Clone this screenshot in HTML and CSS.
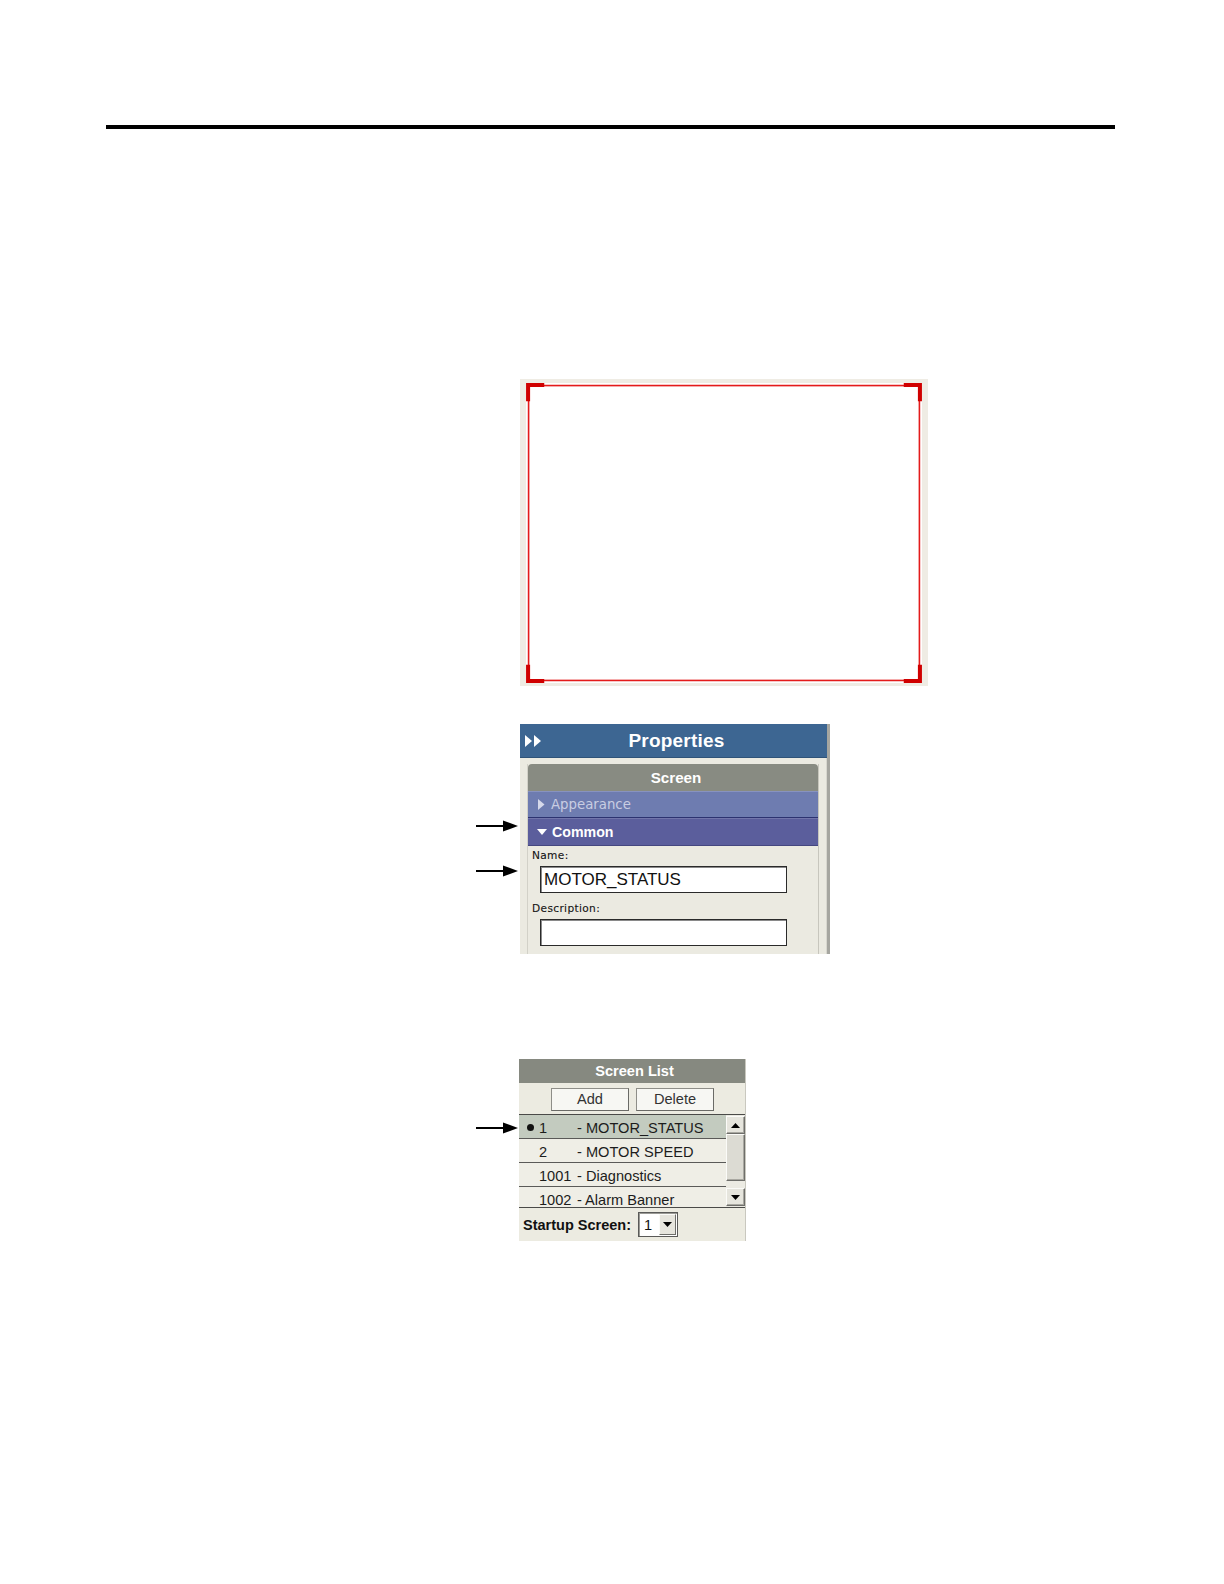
FILE: index.html
```html
<!DOCTYPE html>
<html lang="en">
<head>
<meta charset="utf-8">
<title>Screen properties</title>
<link rel="stylesheet" href="styles.css">
</head>
<body>
<div class="page">
  <div class="rule"></div>

  <div class="canvas">
    <svg class="canvas-svg" width="408" height="307" viewBox="0 0 404 304" preserveAspectRatio="none">
      <rect x="6" y="4" width="392" height="297" fill="#ffffff"/>
      <rect x="8.5" y="6.5" width="387" height="292" fill="none" stroke="#e41b1b" stroke-width="1.6"/>
      <g fill="none" stroke="#d00000" stroke-width="4" stroke-linecap="butt">
        <path d="M8 22 V6 H24"/>
        <path d="M380 6 H396 V22"/>
        <path d="M8 283 V299 H24"/>
        <path d="M380 299 H396 V283"/>
      </g>
    </svg>
  </div>

  <div class="figure figure-props">
    <svg class="arrow arrow-a" width="42" height="12" viewBox="0 0 42 12"><line x1="0" y1="6" x2="30" y2="6" stroke="#000" stroke-width="2"/><polygon points="27,0.5 42,6 27,11.5" fill="#000"/></svg>
    <svg class="arrow arrow-b" width="42" height="12" viewBox="0 0 42 12"><line x1="0" y1="6" x2="30" y2="6" stroke="#000" stroke-width="2"/><polygon points="27,0.5 42,6 27,11.5" fill="#000"/></svg>
    <div class="props">
      <div class="props-head">
        <svg class="ff" width="17" height="12" viewBox="0 0 17 12"><polygon points="0,0 7,6 0,12" fill="#fff"/><polygon points="9,0 16,6 9,12" fill="#fff"/></svg>
        <span class="props-title">Properties</span>
      </div>
      <div class="props-body">
        <div class="group">
          <div class="group-title">Screen</div>
          <div class="cat cat-closed"><svg class="tri" width="9" height="11" viewBox="0 0 9 11"><polygon points="1,0 7.5,5.5 1,11" fill="#d6d9ea"/></svg><span>Appearance</span></div>
          <div class="cat cat-open"><svg class="tri" width="10" height="10" viewBox="0 0 10 10"><polygon points="0,2 10,2 5,8" fill="#ffffff"/></svg><span>Common</span></div>
          <div class="fields">
            <div class="lbl">Name:</div>
            <div class="input">MOTOR_STATUS</div>
            <div class="lbl lbl-2">Description:</div>
            <div class="input"></div>
          </div>
        </div>
      </div>
    </div>
  </div>

  <div class="figure figure-list">
    <svg class="arrow arrow-c" width="42" height="12" viewBox="0 0 42 12"><line x1="0" y1="6" x2="30" y2="6" stroke="#000" stroke-width="2"/><polygon points="27,0.5 42,6 27,11.5" fill="#000"/></svg>
    <div class="slist">
      <div class="slist-head">Screen List</div>
      <div class="btns">
        <div class="btn">Add</div>
        <div class="btn">Delete</div>
      </div>
      <div class="list">
        <div class="rows">
          <div class="row sel"><span class="dot"><span class="dot-mark"></span></span><span class="num">1</span><span>- MOTOR_STATUS</span></div>
          <div class="row"><span class="dot"></span><span class="num">2</span><span>- MOTOR SPEED</span></div>
          <div class="row"><span class="dot"></span><span class="num">1001</span><span>- Diagnostics</span></div>
          <div class="row"><span class="dot"></span><span class="num">1002</span><span>- Alarm Banner</span></div>
        </div>
        <div class="scroll">
          <div class="sb-btn"><svg width="9" height="5" viewBox="0 0 9 5"><polygon points="0,5 9,5 4.5,0" fill="#000"/></svg></div>
          <div class="sb-thumb"></div>
          <div class="sb-track"></div>
          <div class="sb-btn"><svg width="9" height="5" viewBox="0 0 9 5"><polygon points="0,0 9,0 4.5,5" fill="#000"/></svg></div>
        </div>
      </div>
      <div class="startup">
        <span class="startup-lbl">Startup Screen:</span>
        <div class="combo"><span class="combo-val">1</span><span class="combo-btn"><svg width="9" height="5" viewBox="0 0 9 5"><polygon points="0,0 9,0 4.5,5" fill="#000"/></svg></span></div>
      </div>
    </div>
  </div>
</div>
</body>
</html>
```

FILE: styles.css
```css
* { box-sizing: border-box; }

html, body {
  margin: 0;
  padding: 0;
  background: #ffffff;
}

.page {
  width: 1224px;
  min-height: 1584px;
  overflow: hidden;
  padding-top: 125px;
  font-family: "Liberation Sans", Arial, sans-serif;
}

.rule {
  margin-left: 106px;
  width: 1009px;
  height: 4px;
  background: #000000;
}

.canvas {
  margin: 250px 0 0 520px;
  width: 408px;
  height: 307px;
  background: #efece4;
}

.canvas-svg { display: block; }

.figure {
  position: relative;
}

.arrow {
  position: absolute;
  display: block;
}

/* ---------- Properties ---------- */

.figure-props {
  margin: 38px 0 0 520px;
  width: 310px;
}

.arrow-a { left: -44px; top: 96px; }
.arrow-b { left: -44px; top: 141px; }

.props {
  width: 310px;
  height: 230px;
  overflow: hidden;
  background: #ebeae1;
  border-right: 3px solid #a6a6a0;
  box-shadow: inset -1px 0 0 #d8d7cf;
}

.props-head {
  height: 34px;
  background: #3d6692;
  display: flex;
  align-items: center;
  border-bottom: 1px solid #2f5378;
}

.ff {
  display: block;
  margin-left: 5px;
  flex: none;
}

.props-title {
  flex: 1;
  text-align: center;
  margin-right: 16px;
  color: #ffffff;
  font-weight: bold;
  font-size: 19px;
  letter-spacing: 0.2px;
}

.props-body {
  padding: 6px 8px 0 7px;
}

.group {
  border-left: 1px solid #d2d1c8;
  border-right: 1px solid #c7c6bd;
}

.group-title {
  height: 27px;
  background: #888b82;
  border-radius: 4px 4px 0 0;
  color: #ffffff;
  font-weight: bold;
  font-size: 15.2px;
  line-height: 28px;
  text-align: center;
  padding-left: 6px;
}

.cat {
  display: flex;
  align-items: center;
  height: 27px;
  padding-left: 9px;
}

.tri {
  display: block;
  flex: none;
  margin-right: 5px;
}

.cat-closed {
  background: #6e7cb0;
  border-top: 1px solid #8792c0;
  border-bottom: 1px solid #2c3270;
  color: #c9cde2;
  font-family: "DejaVu Sans", Verdana, sans-serif;
  font-size: 13.3px;
}

.cat-open {
  background: #5b5e9c;
  border-top: 1px solid #7275ab;
  border-bottom: 1px solid #45477f;
  color: #ffffff;
  font-weight: bold;
  font-size: 14.2px;
  height: 28px;
}

.fields {
  padding: 2px 0 10px 4px;
}

.lbl {
  font-family: "DejaVu Sans", Verdana, sans-serif;
  font-size: 10.6px;
  line-height: 14px;
  color: #111111;
  letter-spacing: 0.35px;
  -webkit-text-stroke: 0.1px #111111;
}

.lbl-2 { margin-top: 8px; }

.input {
  margin: 4px 0 0 8px;
  width: 247px;
  height: 27px;
  background: #ffffff;
  border: 1px solid #2a2a2a;
  box-shadow: inset 1px 1px 0 #8a8a8a;
  font-size: 17px;
  line-height: 25px;
  padding-left: 3px;
  color: #111111;
}

/* ---------- Screen List ---------- */

.figure-list {
  margin: 105px 0 0 519px;
  width: 227px;
}

.arrow-c { left: -43px; top: 63px; }

.slist {
  width: 227px;
  background: #ecebe1;
  border-right: 1px solid #c9c8bf;
}

.slist-head {
  height: 24px;
  background: #868980;
  color: #ffffff;
  font-weight: bold;
  font-size: 14.6px;
  line-height: 25px;
  text-align: center;
  padding-left: 5px;
}

.btns {
  display: flex;
  gap: 7px;
  height: 31px;
  padding: 5px 0 0 32px;
}

.btn {
  width: 78px;
  height: 23px;
  background: #f7f7f3;
  border: 1px solid #8e8e88;
  border-right-color: #6a6a66;
  border-bottom-color: #6a6a66;
  font-size: 14.6px;
  line-height: 21px;
  text-align: center;
  color: #333333;
}

.list {
  display: flex;
  height: 94px;
  border-top: 1px solid #4a4a48;
  border-bottom: 1px solid #4a4a48;
  overflow: hidden;
}

.rows {
  width: 207px;
  flex: none;
}

.row {
  display: flex;
  align-items: center;
  height: 24px;
  border-bottom: 1px solid #5a5a58;
  font-size: 14.6px;
  line-height: 22px;
  padding-top: 2px;
  color: #1c1c1c;
  padding-left: 7px;
  background: #efeee6;
}

.row.sel {
  background: #c3cbbf;
}

.dot {
  width: 13px;
  flex: none;
  display: flex;
  align-items: center;
  align-self: stretch;
}

.dot-mark {
  display: block;
  width: 7px;
  height: 7px;
  border-radius: 50%;
  background: #111111;
  margin-left: 1px;
}

.num {
  width: 38px;
  flex: none;
}

.scroll {
  width: 19px;
  flex: none;
  display: flex;
  flex-direction: column;
  padding: 1px 0 1px 0;
  background: #e9e8e0;
}

.sb-btn,
.sb-thumb {
  background: #e6e5dd;
  border: 1px solid #fbfbf8;
  border-right-color: #6e6e6a;
  border-bottom-color: #6e6e6a;
  box-shadow: inset -1px -1px 0 #a9a8a1;
}

.sb-btn {
  height: 18px;
  display: flex;
  align-items: center;
  justify-content: center;
}

.sb-btn svg { display: block; }

.sb-thumb {
  height: 47px;
  background: #dcdbd3;
}

.sb-track {
  flex: 1;
  background: #ecebe3;
}

.startup {
  display: flex;
  align-items: center;
  height: 33px;
  padding-left: 4px;
}

.startup-lbl {
  font-weight: bold;
  font-size: 14.5px;
  color: #111111;
}

.combo {
  margin-left: 7px;
  width: 40px;
  height: 25px;
  display: flex;
  align-items: center;
  background: #ffffff;
  border: 1px solid #5a5a58;
  box-shadow: inset 1px 1px 0 #9a9a95;
}

.combo-val {
  flex: 1;
  font-size: 14.6px;
  padding-left: 5px;
  color: #111111;
}

.combo-btn {
  width: 17px;
  height: 21px;
  margin-right: 1px;
  display: flex;
  align-items: center;
  justify-content: center;
  background: #e6e5dd;
  border: 1px solid #fbfbf8;
  border-right-color: #6e6e6a;
  border-bottom-color: #6e6e6a;
}

.combo-btn svg { display: block; }
```
